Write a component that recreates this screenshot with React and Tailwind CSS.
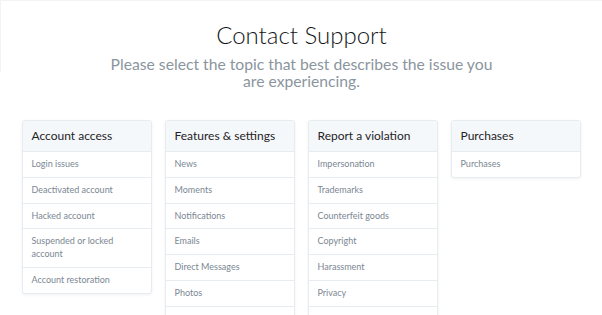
import React from "react";

const cols = [
  { title: "Account access", items: ["Login issues", "Deactivated account", "Hacked account", "Suspended or locked account", "Account restoration"] },
  { title: "Features & settings", items: ["News", "Moments", "Notifications", "Emails", "Direct Messages", "Photos", "Videos", "Lists"] },
  { title: "Report a violation", items: ["Impersonation", "Trademarks", "Counterfeit goods", "Copyright", "Harassment", "Privacy", "Private information", "Spam"] },
  { title: "Purchases", items: ["Purchases"] },
];

export default function App() {
  return (
    <div className="min-h-[315px] bg-white" style={{ fontFamily: "Lato, 'Liberation Sans', sans-serif" }}>
      <div className="h-[72px] border-t border-l border-[#f1f3f5]">
        <h1 className="pt-[20px] text-center text-[24px] leading-[28px] font-light text-[#14171a]">Contact Support</h1>
        <p className="mx-auto mt-[7px] w-[394px] text-center text-[15.7px] leading-[16.5px] font-normal text-[#8a959e]">
          Please select the topic that best describes the issue you are experiencing.
        </p>
      </div>
      <div className="mx-auto mt-[48px] grid w-[559px] grid-cols-4 items-start gap-[13px]">
        {cols.map((c) => (
          <div key={c.title} className="overflow-hidden rounded-[3px] border border-[#e6ecf0] bg-white shadow-[0_1px_3px_rgba(0,0,0,0.06)]">
            <div className="flex h-[31px] items-center border-b border-[#e6ecf0] bg-[#f5f8fa] px-[9px] text-[12px] text-[#1f2326]">
              {c.title}
            </div>
            {c.items.map((it, i) => (
              <div
                key={it}
                className={"px-[9px] py-[6px] text-[9px] leading-[12.8px] text-[#7b8793] " + (i < c.items.length - 1 ? "border-b border-[#e6ecf0]" : "")}
              >
                {it}
              </div>
            ))}
          </div>
        ))}
      </div>
    </div>
  );
}
